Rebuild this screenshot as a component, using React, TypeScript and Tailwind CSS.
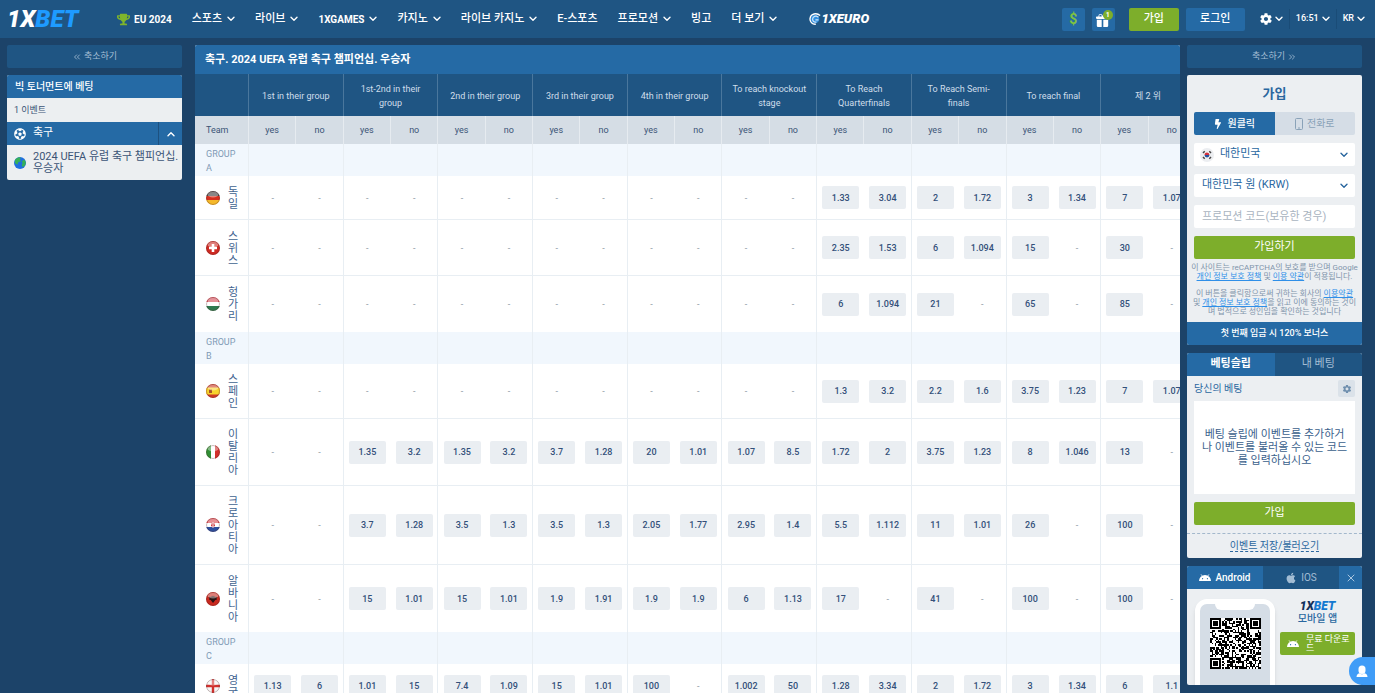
import { Fragment, useState, type ReactNode } from "react";
import { FaApple, FaBolt, FaFutbol, FaTrophy } from "react-icons/fa";
import { BsGiftFill } from "react-icons/bs";
import { IoMdSettings } from "react-icons/io";
import { ChevronsLeft, ChevronsRight, X } from "lucide-react";

type Pair = [string, string];

type Team = {
  name: string;
  flag: ReactNode;
  height: string;
  odds: Pair[];
};

type Group = {
  label: string;
  teams: Team[];
};

const none: Pair = ["", ""];
const empty6: Pair[] = [none, none, none, none, none, none];

const navItems = [
  { label: "스포츠", menu: true },
  { label: "라이브", menu: true },
  { label: "1XGAMES", menu: true },
  { label: "카지노", menu: true },
  { label: "라이브 카지노", menu: true },
  { label: "E-스포츠", menu: false },
  { label: "프로모션", menu: true },
  { label: "빙고", menu: false },
  { label: "더 보기", menu: true },
];

const columns = [
  "1st in their group",
  "1st-2nd in their group",
  "2nd in their group",
  "3rd in their group",
  "4th in their group",
  "To reach knockout stage",
  "To Reach Quarterfinals",
  "To Reach Semi-finals",
  "To reach final",
  "제 2 위",
];

const groups: Group[] = [
  {
    label: "GROUP A",
    teams: [
      {
        name: "독일",
        height: "h-11",
        flag: (
          <>
            <path fill="#3a3a3a" d="M0 0h14v5H0z" />
            <path fill="#d6301f" d="M0 5h14v4H0z" />
            <path fill="#f5b92a" d="M0 9h14v5H0z" />
          </>
        ),
        odds: [...empty6, ["1.33", "3.04"], ["2", "1.72"], ["3", "1.34"], ["7", "1.07"]],
      },
      {
        name: "스위스",
        height: "h-14",
        flag: (
          <>
            <path fill="#cf2a22" d="M0 0h14v14H0z" />
            <path fill="#fff" d="M5.7 3h2.6v2.7H11v2.6H8.3V11H5.7V8.3H3V5.7h2.7z" />
          </>
        ),
        odds: [...empty6, ["2.35", "1.53"], ["6", "1.094"], ["15", ""], ["30", ""]],
      },
      {
        name: "헝가리",
        height: "h-14",
        flag: (
          <>
            <path fill="#d64a55" d="M0 0h14v5H0z" />
            <path fill="#fff" d="M0 5h14v4H0z" />
            <path fill="#2f7a50" d="M0 9h14v5H0z" />
          </>
        ),
        odds: [...empty6, ["6", "1.094"], ["21", ""], ["65", ""], ["85", ""]],
      },
    ],
  },
  {
    label: "GROUP B",
    teams: [
      {
        name: "스페인",
        height: "h-[55px]",
        flag: (
          <>
            <path fill="#cf3a26" d="M0 0h14v14H0z" />
            <path fill="#f8d42c" d="M0 3.500h14v7H0z" />
            <path fill="#a8532a" d="M3 5.500h3v3.500H3z" />
          </>
        ),
        odds: [...empty6, ["1.3", "3.2"], ["2.2", "1.6"], ["3.75", "1.23"], ["7", "1.07"]],
      },
      {
        name: "이탈리아",
        height: "h-[67px]",
        flag: (
          <>
            <path fill="#2f8f35" d="M0 0h5v14H0z" />
            <path fill="#fff" d="M5 0h4v14H5z" />
            <path fill="#d3302b" d="M9 0h5v14H9z" />
          </>
        ),
        odds: [
          none, ["1.35", "3.2"], ["1.35", "3.2"], ["3.7", "1.28"], ["20", "1.01"],
          ["1.07", "8.5"], ["1.72", "2"], ["3.75", "1.23"], ["8", "1.046"], ["13", ""],
        ],
      },
      {
        name: "크로아티아",
        height: "h-[79px]",
        flag: (
          <>
            <path fill="#d9434a" d="M0 0h14v5H0z" />
            <path fill="#fff" d="M0 5h14v4H0z" />
            <path fill="#2c4f9e" d="M0 9h14v5H0z" />
            <path fill="#e7b3b8" d="M5 4h4v4.500L7 10 5 8.500z" />
            <path fill="#cf3a3f" d="M5 4h1.300v1.300H5zM7.700 4H9v1.300H7.700zM6.300 5.300h1.400v1.300H6.300zM5 6.600h1.300V8H5zM7.700 6.600H9V8H7.700z" />
          </>
        ),
        odds: [
          none, ["3.7", "1.28"], ["3.5", "1.3"], ["3.5", "1.3"], ["2.05", "1.77"],
          ["2.95", "1.4"], ["5.5", "1.112"], ["11", "1.01"], ["26", ""], ["100", ""],
        ],
      },
      {
        name: "알바니아",
        height: "h-[67px]",
        flag: (
          <>
            <path fill="#c9281e" d="M0 0h14v14H0z" />
            <path fill="#2a1212" d="M7 4.500l1-1 .6 1.300L11.500 5l-1 1.200.5 1.300-1.700.4L7 11 4.700 7.900 3 7.500l.5-1.300L2.500 5l2.900-.2L6 3.500z" />
          </>
        ),
        odds: [
          none, ["15", "1.01"], ["15", "1.01"], ["1.9", "1.91"], ["1.9", "1.9"],
          ["6", "1.13"], ["17", ""], ["41", ""], ["100", ""], ["100", ""],
        ],
      },
    ],
  },
  {
    label: "GROUP C",
    teams: [
      {
        name: "영국",
        height: "h-11",
        flag: (
          <>
            <path fill="#f4f4f4" d="M0 0h14v14H0z" />
            <path fill="#d0302c" d="M5.800 0h2.400v5.800H14v2.400H8.200V14H5.800V8.200H0V5.800h5.800z" />
          </>
        ),
        odds: [
          ["1.13", "6"], ["1.01", "15"], ["7.4", "1.09"], ["15", "1.01"], ["100", ""],
          ["1.002", "50"], ["1.28", "3.34"], ["2", "1.72"], ["3", "1.34"], ["6", "1.1"],
        ],
      },
    ],
  },
];

const QR_SIZE = 33;

function isFinder(x: number, y: number, ox: number, oy: number) {
  const dx = x - ox;
  const dy = y - oy;
  if (dx < -1 || dy < -1 || dx > 7 || dy > 7) return null;
  if (dx < 0 || dy < 0 || dx > 6 || dy > 6) return false;
  const ring = Math.max(Math.abs(dx - 3), Math.abs(dy - 3));
  return ring !== 2;
}

function buildQr() {
  let seed = 20240;
  let d = "";
  for (let y = 0; y < QR_SIZE; y++) {
    for (let x = 0; x < QR_SIZE; x++) {
      seed = (seed * 1103515245 + 12345) % 2147483648;
      const corner =
        isFinder(x, y, 0, 0) ??
        isFinder(x, y, QR_SIZE - 7, 0) ??
        isFinder(x, y, 0, QR_SIZE - 7);
      const dark = corner ?? (seed >> 12) % 100 < 52;
      if (dark) d += `M${x} ${y}h1v1h-1z`;
    }
  }
  return d;
}

const qrPath = buildQr();

function Chevron({ className = "" }: { className?: string }) {
  return (
    <svg viewBox="0 0 8 6" className={`h-1.5 w-2 shrink-0 ${className}`} fill="none" aria-hidden="true">
      <path d="M1 1.300l3 3 3-3" stroke="currentColor" strokeWidth="1.400" strokeLinecap="round" strokeLinejoin="round" />
    </svg>
  );
}

function Flag({ children }: { children: ReactNode }) {
  return (
    <svg viewBox="0 0 14 14" className="size-3.5 shrink-0 rounded-full" aria-hidden="true">
      {children}
      <ellipse cx="7" cy="3.500" rx="5.500" ry="3" fill="#fff" opacity=".4" />
      <circle cx="7" cy="7" r="6.500" fill="none" stroke="#5a2a2a" strokeOpacity=".35" />
    </svg>
  );
}

function Globe() {
  return (
    <svg viewBox="0 0 14 14" className="size-3 shrink-0 rounded-full" aria-hidden="true">
      <path fill="#1f6fe0" d="M0 0h14v14H0z" />
      <path fill="#35b05a" d="M1 3l4-3 3 1-1 2 1 2-3 1-1 3-3-2zM9 5l3-2 2 3-1 4-3 2-1-3 1-2z" />
    </svg>
  );
}

function KoreaFlag() {
  return (
    <svg viewBox="0 0 14 14" className="pointer-events-none absolute left-1.5 size-3.5 rounded-full" aria-hidden="true">
      <path fill="#eceef1" d="M0 0h14v14H0z" />
      <path stroke="#444" strokeWidth="1.500" d="M3 5l1.700-1.700M9.300 3.300L11 5M3 9l1.700 1.700M9.300 10.700L11 9" />
      <path fill="#d22f3a" d="M4.500 7a2.500 2.500 0 0 1 5 0z" />
      <path fill="#2450a0" d="M4.500 7a2.500 2.500 0 0 0 5 0z" />
    </svg>
  );
}

function EuroBall() {
  return (
    <svg viewBox="0 0 14 14" className="size-3" fill="none" aria-hidden="true">
      <circle cx="7" cy="7" r="5" fill="#2f8fe0" />
      <path stroke="#fff" strokeWidth="1.600" d="M13 3C9-.5 2 .5 1.200 6.500.8 10.500 4 13.500 8 13" />
      <path stroke="#cfe6fa" strokeWidth="1.400" d="M11 5C8 2.500 4.500 4 4.200 7c-.1 2.500 2 4 4.500 3.500M11 8H7.500" />
    </svg>
  );
}

function AndroidHead() {
  return (
    <svg viewBox="0 0 12 7" className="h-[7px] w-3 shrink-0" aria-hidden="true">
      <path fill="currentColor" d="M0 7a6 6 0 0 1 12 0z" />
      <path stroke="currentColor" strokeWidth=".7" d="M2 .3l1.500 2.200M10 .3L8.500 2.500" />
      <circle cx="3.600" cy="4.700" r=".6" fill="#256aa5" />
      <circle cx="8.400" cy="4.700" r=".6" fill="#256aa5" />
    </svg>
  );
}

function OddsCell({ value, last }: { value: string; last: boolean }) {
  return (
    <td className={last ? "border-r border-[#e8eef3] p-0" : "p-0"}>
      {value ? (
        <button className="mx-auto block h-[23px] w-[37px] rounded-xs bg-[#eaeef2] pt-0.5 font-medium text-[#33507a]">
          {value}
        </button>
      ) : (
        <span className="block pt-0.5 text-[#8b97a3]">-</span>
      )}
    </td>
  );
}

function Header() {
  return (
    <header className="flex h-[38px] shrink-0 items-center bg-[#1f5583] pr-2.5 pl-[7px] text-[11px] font-medium text-white">
      <a href="#" className="w-[110px] text-2xl font-black italic">
        1X<span className="text-[#1e9bff]">BET</span>
      </a>
      <nav className="flex items-center gap-5 whitespace-nowrap">
        <a href="#" className="flex items-center gap-1 text-[10px] font-bold">
          <FaTrophy className="size-[13px] text-[#7fb52b]" />
          EU 2024
        </a>
        {navItems.map((item) => (
          <a key={item.label} href="#" className="flex items-center gap-[5px]">
            <span className={item.label === "1XGAMES" ? "text-[10px] font-bold" : ""}>{item.label}</span>
            {item.menu && <Chevron />}
          </a>
        ))}
        <a href="#" className="ml-3 flex items-center text-[13px] font-black italic">
          <EuroBall />
          1XEURO
        </a>
      </nav>
      <div className="ml-auto flex items-center">
        <button className="size-[23px] rounded-xs bg-[#256aa5] text-sm font-bold text-[#7fc241]">$</button>
        <button aria-label="Bonus" className="relative ml-[7px] flex size-[23px] items-end rounded-xs bg-[#256aa5] pb-1 pl-1">
          <BsGiftFill className="size-[13px]" />
          <span className="absolute top-0.5 right-0.5 size-2.5 rounded-full bg-[#7dae2b] text-[7px] leading-[10px] font-bold">1</span>
        </button>
        <button className="ml-3.5 h-[23px] w-[50px] rounded-xs bg-[#7dae2b]">가입</button>
        <button className="ml-[7px] h-[23px] w-[59px] rounded-xs bg-[#256aa5]">로그인</button>
        <button aria-label="Settings" className="ml-3.5 flex items-center gap-0.5 pr-1.5">
          <IoMdSettings className="size-3.5" />
          <Chevron />
        </button>
        <button className="flex h-5 items-center gap-[3px] border-x border-[#1a4c77] px-1.5 text-[9px]">
          16:51
          <Chevron />
        </button>
        <button className="flex items-center gap-[3px] pl-1.5 text-[9px]">
          KR
          <Chevron />
        </button>
      </div>
    </header>
  );
}

function Sidebar() {
  return (
    <aside className="w-[175px] shrink-0 text-[11px]">
      <button className="flex h-[23px] w-full items-center justify-center gap-0.5 rounded-xs bg-[#1f5583] text-[9px] text-[#a3bdd4]">
        <ChevronsLeft className="size-2.5" />
        축소하기
      </button>
      <div className="mt-[7px] overflow-hidden rounded-xs bg-[#eceff1] text-[#3b5476]">
        <h2 className="h-[23px] bg-[#256aa5] px-2 text-[10px] leading-[23px] font-medium text-white">빅 토너먼트에 베팅</h2>
        <p className="h-6 px-[7px] text-[9px] leading-6">1 이벤트</p>
        <div className="flex h-[23px] items-center bg-[#256aa5] pl-[7px] text-white">
          <FaFutbol className="mr-[7px] size-3" />
          <span className="grow">축구</span>
          <button aria-label="Toggle" className="flex h-full w-6 items-center justify-center border-l border-[#1d5180]">
            <Chevron className="rotate-180" />
          </button>
        </div>
        <a href="#" className="flex h-[35px] items-center gap-[7px] pl-[7px] leading-3">
          <Globe />
          <span className="whitespace-nowrap">
            2024 UEFA 유럽 축구 챔피언십.
            <br />
            우승자
          </span>
        </a>
      </div>
    </aside>
  );
}

function OddsTable() {
  return (
    <main className="mr-[7px] ml-[13px] min-w-0 grow overflow-hidden rounded-t-xs bg-white">
      <h1 className="h-[29px] bg-[#256aa5] px-2.5 text-[11px] leading-[29px] font-bold text-white">
        축구. 2024 UEFA 유럽 축구 챔피언십. 우승자
      </h1>
      <table className="w-[1001px] table-fixed border-separate border-spacing-0 text-center text-[9px]">
        <colgroup>
          <col className="w-[54px]" />
          {columns.map((name) => (
            <Fragment key={name}>
              <col />
              <col />
            </Fragment>
          ))}
        </colgroup>
        <thead>
          <tr className="h-[42px] bg-[#1f5583] leading-3.5 text-[#cfdeeb]">
            <th className="border-r border-[#4a779d]" />
            {columns.map((name) => (
              <th key={name} colSpan={2} className="border-r border-[#4a779d] px-1.5 pt-0.5 pb-0 font-normal">
                {name}
              </th>
            ))}
          </tr>
          <tr className="h-7 bg-[#d5dde5] text-[#3b5476]">
            <th className="border-r border-[#e6ebf0] pt-0.5 pb-0 pl-[11px] text-left font-normal">Team</th>
            {columns.map((name) => (
              <Fragment key={name}>
                <th className="border-r border-[#e6ebf0] px-0 pt-0.5 pb-0 font-normal">yes</th>
                <th className="border-r border-[#e6ebf0] px-0 pt-0.5 pb-0 font-normal">no</th>
              </Fragment>
            ))}
          </tr>
        </thead>
        <tbody>
          {groups.map((group) => (
            <Fragment key={group.label}>
              <tr className="h-8 bg-[#f1f7fd]">
                <th className="border-r border-[#e8eef3] pt-0.5 pr-1.5 pb-0 pl-[11px] text-left leading-3.5 font-normal text-[#7f9ab5]">
                  {group.label}
                </th>
                {columns.map((name) => (
                  <td key={name} colSpan={2} className="border-r border-[#e8eef3] p-0" />
                ))}
              </tr>
              {group.teams.map((team, i) => (
                <tr
                  key={team.name}
                  className={`${team.height} ${i < group.teams.length - 1 ? "*:border-b *:border-b-[#e8eef3]" : ""}`}
                >
                  <th className="border-r border-[#e8eef3] py-0 pr-[9px] pl-[11px] font-normal">
                    <div className="flex items-center justify-between">
                      <Flag>{team.flag}</Flag>
                      <span className="w-3 pt-0.5 text-[11px] leading-3 break-all text-[#3f6390]">{team.name}</span>
                    </div>
                  </th>
                  {team.odds.map(([yes, no], index) => (
                    <Fragment key={columns[index]}>
                      <OddsCell value={yes} last={false} />
                      <OddsCell value={no} last />
                    </Fragment>
                  ))}
                </tr>
              ))}
            </Fragment>
          ))}
        </tbody>
      </table>
    </main>
  );
}

function Registration() {
  const [promo, setPromo] = useState("");

  return (
    <section className="mt-[7px] overflow-hidden rounded-xs bg-[#eceff2] text-[11px]">
      <form className="flex flex-col gap-2 px-[7px] pb-1.5" onSubmit={(e) => e.preventDefault()}>
        <h2 className="mt-2 text-center text-[13px] leading-[21px] font-bold text-[#2a679f]">가입</h2>
        <div className="grid h-[23px] grid-cols-2 overflow-hidden rounded-xs text-[10px]">
          <button type="button" className="flex items-center justify-center gap-1 bg-[#256aa5] font-medium text-white">
            <FaBolt className="size-2.5" />
            원클릭
          </button>
          <button type="button" className="flex items-center justify-center gap-1 bg-[#d5dde6] text-[#8aa2b8]">
            <svg viewBox="0 0 8 12" className="h-3 w-2" fill="none" stroke="currentColor" aria-hidden="true">
              <rect x=".5" y=".5" width="7" height="11" rx="1" />
              <path d="M3 10h2" />
            </svg>
            전화로
          </button>
        </div>
        <div className="relative flex items-center text-[#2a679f]">
          <KoreaFlag />
          <select aria-label="국가" className="h-[23px] w-full appearance-none rounded-xs bg-white pl-[26px]">
            <option>대한민국</option>
          </select>
          <Chevron className="pointer-events-none absolute right-[7px]" />
        </div>
        <div className="relative flex items-center text-[#2a679f]">
          <select aria-label="통화" className="h-[23px] w-full appearance-none rounded-xs bg-white pl-2">
            <option>대한민국 원 (KRW)</option>
          </select>
          <Chevron className="pointer-events-none absolute right-[7px]" />
        </div>
        <input
          aria-label="프로모션 코드"
          value={promo}
          onChange={(e) => setPromo(e.target.value)}
          placeholder="프로모션 코드(보유한 경우)"
          className="h-[23px] w-full rounded-xs bg-white px-2 placeholder:text-[#a9b4bf]"
        />
        <button className="h-[23px] rounded-xs bg-[#7dae2b] text-white">가입하기</button>
        <div className="-mx-1 -mt-1 text-center text-[8px] leading-[9px] whitespace-nowrap text-[#7f94ab]">
          <p>
            이 사이트는 reCAPTCHA의 보호를 받으며 Google
            <br />
            <a href="#" className="text-[#2f8fe8] underline">개인 정보 보호 정책</a> 및{" "}
            <a href="#" className="text-[#2f8fe8] underline">이용 약관</a>이 적용됩니다.
          </p>
          <p className="mt-2">
            이 버튼을 클릭함으로써 귀하는 회사의{" "}
            <a href="#" className="text-[#2f8fe8] underline">이용약관</a>
            <br />및 <a href="#" className="text-[#2f8fe8] underline">개인 정보 보호 정책</a>을 읽고 이에 동의하는 것이
            <br />며 법적으로 성인임을 확인하는 것입니다
          </p>
        </div>
      </form>
      <p className="h-[23px] bg-[#256aa5] text-center text-[9px] leading-[23px] font-medium text-white">
        첫 번째 입금 시 120% 보너스
      </p>
    </section>
  );
}

function BetSlip() {
  return (
    <section className="mt-2 overflow-hidden rounded-xs bg-[#eceff2] text-[11px] text-[#2a679f]">
      <div className="grid h-[23px] grid-cols-2">
        <button className="bg-[#256aa5] font-bold text-white">베팅슬립</button>
        <button className="bg-[#1f5583] text-[#a3bdd4]">내 베팅</button>
      </div>
      <div className="flex h-[25px] items-center justify-between px-[7px] text-[10px]">
        당신의 베팅
        <button aria-label="Settings" className="flex size-[17px] items-center justify-center rounded-xs bg-[#dbe2e9] text-[#6f8fae]">
          <IoMdSettings className="size-2.5" />
        </button>
      </div>
      <div className="px-[7px]">
        <p className="flex h-[93px] items-center bg-white px-1.5 text-center leading-[13px] break-all text-[#3b5f8c]">
          베팅 슬립에 이벤트를 추가하거나 이벤트를 불러올 수 있는 코드를 입력하십시오
        </p>
        <button className="my-2 h-[23px] w-full rounded-xs bg-[#7dae2b] text-white">가입</button>
      </div>
      <p className="h-[25px] border-t border-dashed border-[#a3b8cc] text-center leading-6">
        <a href="#" className="border-b border-dashed border-[#2a679f] text-[10px]">이벤트 저장/불러오기</a>
      </p>
    </section>
  );
}

function AppPromo() {
  return (
    <section className="mt-2 overflow-hidden rounded-xs bg-[#eceff2] text-[10px]">
      <div className="flex h-[23px]">
        <button className="flex w-[76px] items-center justify-center gap-1 bg-[#256aa5] font-medium text-white">
          <AndroidHead />
          Android
        </button>
        <button className="flex grow items-center justify-center gap-1 bg-[#1f5583] text-[#a3bdd4]">
          <FaApple className="size-3" />
          IOS
        </button>
        <button aria-label="Close" className="flex w-[23px] items-center justify-center bg-[#256aa5] text-[#a9c6e0]">
          <X className="size-3" />
        </button>
      </div>
      <div className="flex h-24 overflow-hidden pt-2.5 pr-[7px] pl-2">
        <div className="relative h-[120px] w-20 shrink-0 rounded-xl border-[5px] border-white bg-[#d5dde6] pt-3.5 shadow-md">
          <span className="absolute top-0 left-1/2 h-1.5 w-10 -translate-x-1/2 rounded-b-md bg-white" />
          <svg viewBox="0 0 33 33" className="mx-auto size-[51px]" shapeRendering="crispEdges" role="img" aria-label="QR">
            <path fill="#fff" d="M0 0h33v33H0z" />
            <path fill="#000" d={qrPath} />
          </svg>
        </div>
        <div className="grow pl-[5px] text-center">
          <p className="text-xs leading-3.5 font-black text-[#12305a] italic">
            1X<span className="text-[#1479d0]">BET</span>
          </p>
          <p className="leading-3 font-medium text-[#2a679f]">모바일 앱</p>
          <button className="mt-[7px] flex h-[23px] w-[75px] items-center gap-[7px] rounded-xs bg-[#7dae2b] pr-1 pl-[7px] text-left text-[9px] leading-[9px] break-all text-white">
            <AndroidHead />
            <span>무료 다운로드</span>
          </button>
        </div>
      </div>
    </section>
  );
}

export default function App() {
  return (
    <div className="flex h-screen flex-col overflow-hidden bg-[#1c4369] font-['Roboto','Noto_Sans_CJK_KR',sans-serif]">
      <Header />
      <div className="flex min-h-0 grow pt-[7px] pr-[13px] pl-[7px]">
        <Sidebar />
        <OddsTable />
        <aside className="w-[175px] shrink-0">
          <button className="flex h-[23px] w-full items-center justify-center gap-0.5 rounded-xs bg-[#1f5583] text-[9px] text-[#a3bdd4]">
            축소하기
            <ChevronsRight className="size-2.5" />
          </button>
          <Registration />
          <BetSlip />
          <AppPromo />
        </aside>
      </div>
      <button
        aria-label="Chat"
        className="fixed right-0 bottom-2 flex h-7 w-[26px] items-center justify-center rounded-l-full bg-[#3f9cf7] text-white"
      >
        <svg viewBox="0 0 12 12" className="size-3" fill="currentColor" aria-hidden="true">
          <path d="M2.500 4a3.500 3.500 0 0 1 7 0v1.500a3.500 3.500 0 0 1-7 0z" />
          <path d="M.5 12c0-2.500 1.500-3.500 3.500-3.800L6 9.500l2-1.300c2 .3 3.500 1.300 3.500 3.800z" />
        </svg>
      </button>
    </div>
  );
}
